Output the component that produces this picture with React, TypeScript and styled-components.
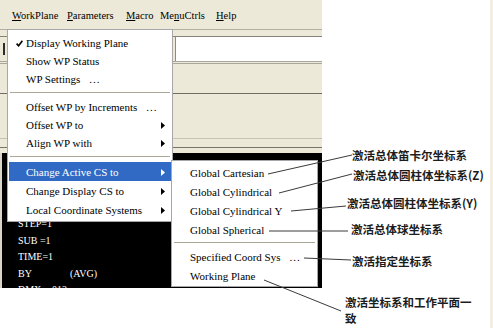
import React from 'react';
import styled, { createGlobalStyle } from 'styled-components';

const Global = createGlobalStyle`
  html, body { margin: 0; padding: 0; background: #fff; }
  body { width: 493px; height: 328px; overflow: hidden; }
`;

const Page = styled.div`
  position: relative;
  width: 493px;
  height: 328px;
  box-sizing: border-box;
  background: #fff;
  border-right: 3px solid #f4eedf;
  overflow: hidden;
  font-family: "Liberation Serif", "Times New Roman", serif;
`;

/* ---------- background application window ---------- */
const Window = styled.div`
  width: 322px;
  height: 288px;
  display: flex;
  flex-direction: column;
  background: #ece9d8;
`;

const MenuBar = styled.div`
  height: 29px;
  flex: none;
  box-sizing: border-box;
  display: flex;
  align-items: center;
  padding: 2px 0 0 12px;
  font-size: 10.5px;
  color: #000;
`;

const MenuTitle = styled.span<{ $w: number }>`
  flex: none;
  width: ${(p) => p.$w}px;
  white-space: nowrap;
  u { text-decoration: underline; text-underline-offset: 1px; }
`;

const Band = styled.div<{ $h: number; $top?: string; $bottom?: string }>`
  flex: none;
  height: ${(p) => p.$h}px;
  box-sizing: border-box;
  border-top: ${(p) => p.$top ?? 'none'};
  border-bottom: ${(p) => p.$bottom ?? 'none'};
`;

const InputRow = styled.div`
  flex: none;
  height: 24px;
  display: flex;
`;

const LeftDock = styled.div`
  width: 175px;
  flex: none;
  display: flex;
  align-items: center;
  padding-left: 3px;
  box-sizing: border-box;
`;

const Grip = styled.div`
  width: 2px;
  height: 12px;
  background: #2c2c2c;
`;

const Field = styled.div`
  flex: 1;
  background: #fff;
  border-left: 1px solid #8d8b80;
`;

const Console = styled.div`
  flex: 1;
  min-height: 0;
  overflow: hidden;
  background: #000;
  color: #fff;
  border-left: 2px solid #d9d6c9;
  padding: 63px 0 0 16px;
  font-size: 10px;
  line-height: 16.5px;
`;

const ConsoleLine = styled.div`
  white-space: nowrap;
`;

const Key = styled.span`
  display: inline-block;
  width: 52px;
`;

/* ---------- dropdown menus ---------- */
const Menu = styled.div<{ $x: number; $y: number; $w: number }>`
  position: absolute;
  left: ${(p) => p.$x}px;
  top: ${(p) => p.$y}px;
  width: ${(p) => p.$w}px;
  box-sizing: border-box;
  background: #fff;
  border: 1px solid #a7a6aa;
  padding: ${(p) => (p.$w > 150 ? '4px 1px 2px' : '2px 1px 1px')};
  font-size: 11px;
  color: #000;
`;

const Row = styled.div<{ $h: number; $active?: boolean; $indent: number }>`
  height: ${(p) => p.$h}px;
  display: grid;
  grid-template-columns: ${(p) => p.$indent}px 1fr 10px;
  align-items: center;
  white-space: nowrap;
  background: ${(p) => (p.$active ? '#316ac5' : 'transparent')};
  color: ${(p) => (p.$active ? '#fff' : '#000')};
`;

const CheckCell = styled.span`
  display: flex;
  justify-content: flex-start;
  padding-left: 7px;
`;

const Dots = styled.span`
  margin-left: 9px;
  letter-spacing: 1px;
`;

const Separator = styled.div<{ $h: number }>`
  height: ${(p) => p.$h}px;
  display: flex;
  align-items: center;
  padding: 0 1px;
  &::after {
    content: '';
    flex: 1;
    border-top: 1px solid #aca899;
    border-bottom: 1px solid #fff;
  }
`;

/* ---------- annotations ---------- */
const Leaders = styled.svg`
  position: absolute;
  left: 0;
  top: 0;
  pointer-events: none;
`;

const Label = styled.div<{ $x: number; $y: number }>`
  position: absolute;
  left: ${(p) => p.$x}px;
  top: ${(p) => p.$y}px;
  font-family: "Noto Sans CJK SC", "Liberation Sans", sans-serif;
  font-weight: 700;
  font-size: 11.5px;
  line-height: 16px;
  color: #1c1c1c;
  white-space: nowrap;
`;

const Check = () => (
  <svg width="7" height="7" viewBox="0 0 7 7">
    <path d="M0.6 3.6 L2.6 5.8 L6.4 0.8" fill="none" stroke="#000" strokeWidth="1.6" />
  </svg>
);

const Arrow = ({ color }: { color: string }) => (
  <svg width="4" height="7" viewBox="0 0 4 7">
    <path d="M0 0 L4 3.5 L0 7 Z" fill={color} />
  </svg>
);

type Item = { text: string; dots?: boolean; arrow?: boolean; check?: boolean; active?: boolean; h: number } | { sep: number };

const mainItems: Item[] = [
  { text: 'Display Working Plane', check: true, h: 18 },
  { text: 'Show WP Status', h: 18 },
  { text: 'WP Settings', dots: true, h: 18 },
  { sep: 10 },
  { text: 'Offset WP by Increments', dots: true, h: 18 },
  { text: 'Offset WP to', arrow: true, h: 18 },
  { text: 'Align WP with', arrow: true, h: 18 },
  { sep: 10 },
  { text: 'Change Active CS to', arrow: true, active: true, h: 19 },
  { text: 'Change Display CS to', arrow: true, h: 19 },
  { text: 'Local Coordinate Systems', arrow: true, h: 19 },
];

const subItems: Item[] = [
  { text: 'Global Cartesian', h: 19 },
  { text: 'Global Cylindrical', h: 19 },
  { text: 'Global Cylindrical Y', h: 19 },
  { text: 'Global Spherical', h: 19 },
  { sep: 8 },
  { text: 'Specified Coord Sys', dots: true, h: 19 },
  { text: 'Working Plane', h: 19 },
];

const renderItems = (items: Item[], indent: number) =>
  items.map((it, i) =>
    'sep' in it ? (
      <Separator key={i} $h={it.sep} />
    ) : (
      <Row key={i} $h={it.h} $active={it.active} $indent={indent}>
        <CheckCell>{it.check ? <Check /> : null}</CheckCell>
        <span>
          {it.text}
          {it.dots ? <Dots>...</Dots> : null}
        </span>
        <span>{it.arrow ? <Arrow color={it.active ? '#fff' : '#000'} /> : null}</span>
      </Row>
    )
  );

const leaders: [number, number, number, number][] = [
  [268, 174, 352, 155],
  [279, 193, 352, 174],
  [291, 211, 346, 206],
  [269, 231, 348, 231],
  [304, 258, 351, 260],
  [264, 280, 341, 311],
];

export default function App() {
  return (
    <Page>
      <Global />
      <Window>
        <MenuBar>
          <MenuTitle $w={55}><u>W</u>orkPlane</MenuTitle>
          <MenuTitle $w={59}><u>P</u>arameters</MenuTitle>
          <MenuTitle $w={34}><u>M</u>acro</MenuTitle>
          <MenuTitle $w={56}>Me<u>n</u>uCtrls</MenuTitle>
          <MenuTitle $w={25}><u>H</u>elp</MenuTitle>
        </MenuBar>
        <Band $h={8} $top="1px solid #b3b0a3" $bottom="1px solid #85837a" />
        <InputRow>
          <LeftDock>
            <Grip />
          </LeftDock>
          <Field />
        </InputRow>
        <Band $h={33} $top="3px double #a9a79b" $bottom="1px solid #6f6d63" />
        <Band $h={44} />
        <Band $h={10} $top="1px solid #c6c3b6" $bottom="1px solid #75736a" />
        <Band $h={5} />
        <Console>
          <ConsoleLine>STEP=1</ConsoleLine>
          <ConsoleLine>SUB =1</ConsoleLine>
          <ConsoleLine>TIME=1</ConsoleLine>
          <ConsoleLine>
            <Key>BY</Key>(AVG)
          </ConsoleLine>
          <ConsoleLine>DMX =.012</ConsoleLine>
        </Console>
      </Window>

      <Menu $x={7} $y={29} $w={166}>
        {renderItems(mainItems, 17)}
      </Menu>
      <Menu $x={171} $y={160} $w={147}>
        {renderItems(subItems, 17)}
      </Menu>

      <Leaders width="493" height="328" viewBox="0 0 493 328">
        {leaders.map(([x1, y1, x2, y2], i) => (
          <line key={i} x1={x1} y1={y1} x2={x2} y2={y2} stroke="#3a3a3a" strokeWidth="1" />
        ))}
      </Leaders>

      <Label $x={352} $y={147}>激活总体笛卡尔坐标系</Label>
      <Label $x={353} $y={167}>激活总体圆柱体坐标系(Z)</Label>
      <Label $x={347} $y={195}>激活总体圆柱体坐标系(Y)</Label>
      <Label $x={351} $y={221}>激活总体球坐标系</Label>
      <Label $x={352} $y={253}>激活指定坐标系</Label>
      <Label $x={345} $y={294}>
        激活坐标系和工作平面一
        <br />
        致
      </Label>
    </Page>
  );
}
